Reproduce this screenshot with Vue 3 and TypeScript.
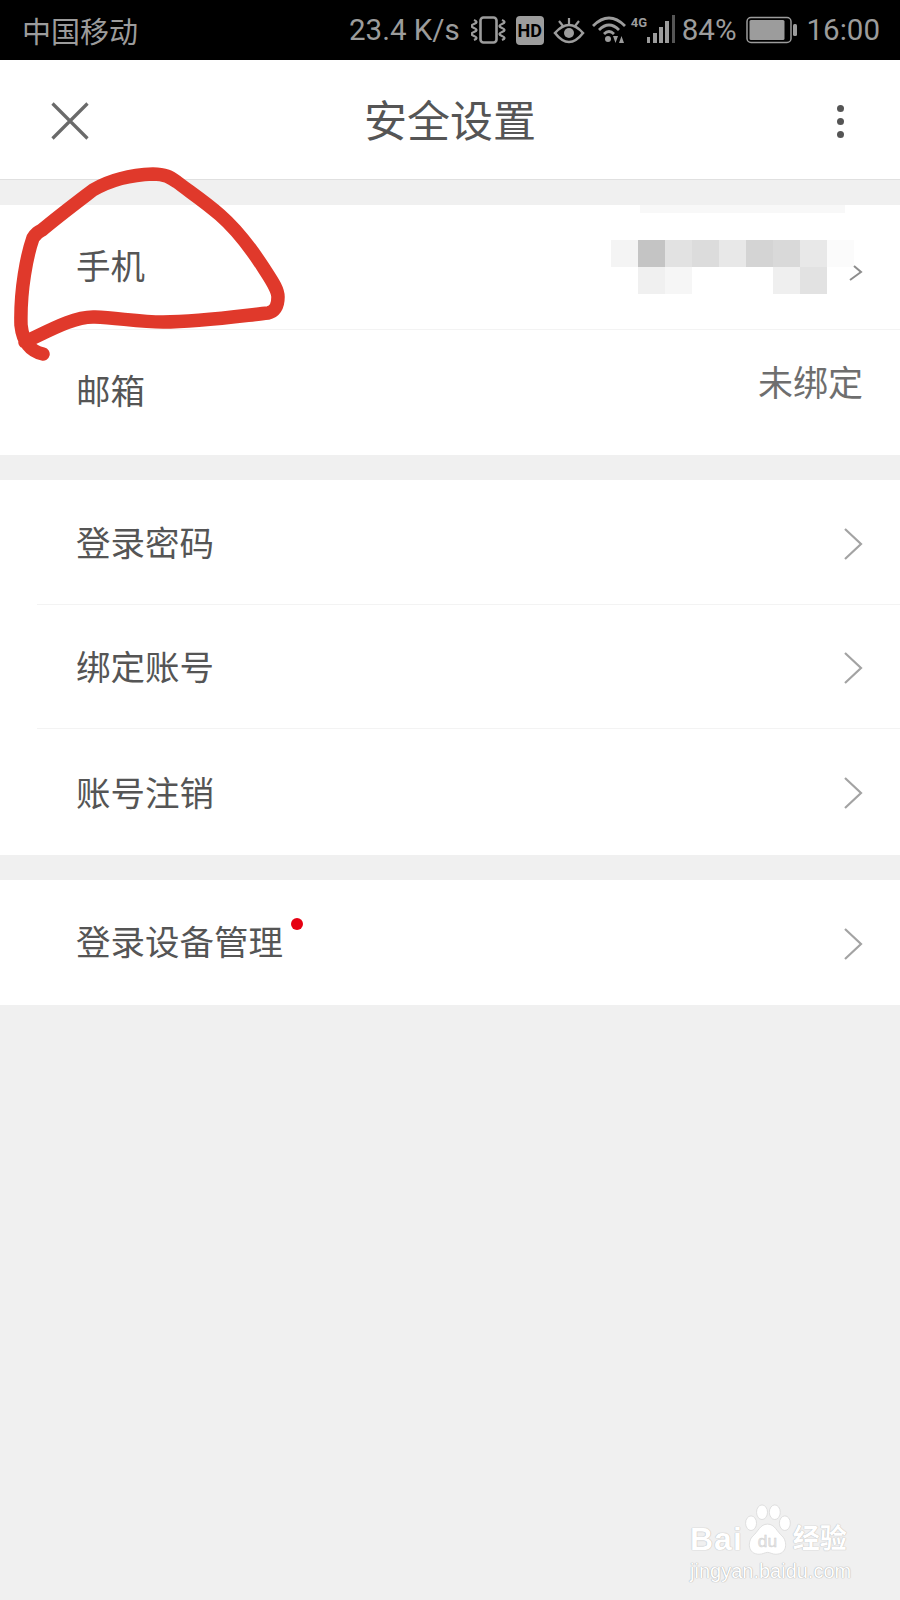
<script setup lang="ts">
interface Row {
  label: string;
  value?: string;
  arrow?: boolean;
  dot?: boolean;
  mosaic?: boolean;
}

const groups: Row[][] = [
  [
    { label: '手机', mosaic: true },
    { label: '邮箱', value: '未绑定' },
  ],
  [
    { label: '登录密码', arrow: true },
    { label: '绑定账号', arrow: true },
    { label: '账号注销', arrow: true },
  ],
  [{ label: '登录设备管理', arrow: true, dot: true }],
];

// pixelated phone number, two rows of blocks
const mosaic: string[] = [
  '#f4f4f4', '#c4c4c4', '#e2e2e2', '#dcdcdc', '#e8e8e8', '#d4d4d4', '#d9d9d9', '#e8e8e8', '#fbfbfb',
  '#ffffff', '#f0f0f0', '#f6f6f6', '#ffffff', '#ffffff', '#ffffff', '#efefef', '#e2e2e2', '#ffffff',
];
</script>

<template>
  <div class="page">
    <div class="status">
      <span class="carrier">中国移动</span>
      <div class="status-right">
        <span class="speed">23.4 K/s</span>
        <svg class="ic" width="36" height="30" viewBox="0 0 36 30" fill="none" stroke="#9c9c9c" stroke-width="2.400">
          <rect x="9.500" y="2.500" width="16" height="25" rx="3" stroke-width="2.600" />
          <path d="M3 5q5 2 0 4t0 4t0 4t0 4t0 4M31 5q5 2 0 4t0 4t0 4t0 4t0 4" />
        </svg>
        <span class="hd">HD</span>
        <svg class="ic" width="32" height="30" viewBox="0 0 32 30" fill="none" stroke="#9c9c9c" stroke-width="2.600">
          <path d="M2 18Q16 2 30 18Q16 36 2 18z" />
          <circle cx="16" cy="18" r="5" fill="#9c9c9c" stroke="none" />
          <path d="M16 3v6M6 6l4 5M26 6l-4 5" stroke-width="2.200" />
        </svg>
        <svg class="ic wifi" width="34" height="30" viewBox="0 0 34 30" fill="none" stroke="#9c9c9c" stroke-width="2.800">
          <path d="M1 11Q17-5 33 11M7 15Q17 5 27 15M12 19Q17 14 22 19" />
          <circle cx="16" cy="24" r="3" fill="#9c9c9c" stroke="none" />
          <path d="M21 21h5l-2.500 7zM27 28h5l-2.500-7z" fill="#9c9c9c" stroke="none" />
        </svg>
        <div class="signal">
          <span class="four-g">4G</span>
          <svg width="29" height="30" viewBox="0 0 29 30" fill="#9c9c9c">
            <rect x="1" y="22" width="3" height="6" />
            <rect x="7" y="18" width="4" height="10" />
            <rect x="13" y="12" width="4" height="16" />
            <rect x="19" y="6" width="4" height="22" />
            <rect x="26" y="0" width="3" height="28" fill="#555" />
          </svg>
        </div>
        <span class="pct">84%</span>
        <svg class="ic" width="51" height="28" viewBox="0 0 51 28">
          <rect x="1" y="1.500" width="44" height="25" rx="4" fill="none" stroke="#9c9c9c" stroke-width="1.500" />
          <rect x="3.500" y="4" width="35" height="20" rx="1.500" fill="#9c9c9c" />
          <rect x="47" y="8" width="4" height="12" rx="1.500" fill="#9c9c9c" />
        </svg>
        <span class="time">16:00</span>
      </div>
    </div>

    <header class="nav">
      <svg class="close" width="40" height="40" viewBox="0 0 40 40" stroke="#6a6a6a" stroke-width="3.200">
        <path d="M2.500 2.500l35 35M37.500 2.500l-35 35" />
      </svg>
      <h1 class="title">安全设置</h1>
      <div class="more"><i></i><i></i><i></i></div>
    </header>

    <section v-for="(group, g) in groups" :key="g" class="card">
      <div v-for="row in group" :key="row.label" class="row">
        <span class="label">{{ row.label }}</span>
        <i v-if="row.dot" class="dot"></i>
        <div class="spacer"></div>
        <div v-if="row.mosaic" class="mosaic">
          <i v-for="(c, n) in mosaic" :key="n" :style="{ background: c }"></i>
        </div>
        <span v-if="row.value" class="value">{{ row.value }}</span>
        <svg v-if="row.arrow" class="arrow" width="20" height="32" viewBox="0 0 20 32" fill="none" stroke="#a3a3a3" stroke-width="2.200">
          <path d="M2 1l16 15L2 31" />
        </svg>
        <svg v-if="row.mosaic" class="arrow-small" width="15" height="16" viewBox="0 0 15 16" fill="none" stroke="#8d8d8d" stroke-width="2">
          <path d="M6 1l7 6L2 15" />
        </svg>
      </div>
    </section>

    <div class="blur-band"></div>

    <svg class="scribble" width="300" height="220" viewBox="0 0 300 220" fill="none" stroke="#e0392b" stroke-width="13.500" stroke-linecap="round" stroke-linejoin="round">
      <path d="M43 189C30 186 23 178 21 160C20 125 27 90 33 73C36 68 38 67 42 65C60 50 76 38 93 25C105 18 125 10 153 9C165 9 170 12 177 17C190 27 204 36 220 50C236 64 250 82 263 102C272 116 278 124 278 132C278 142 274 147 268 148C240 151 200 157 163 157C140 157 118 153 95 152C75 151 50 165 25 177" />
    </svg>

    <div class="watermark">
      <div class="wm-top">
        <span class="wm-bai">Bai</span>
        <svg class="wm-paw" width="47" height="53" viewBox="0 0 50 58" fill="#fff" stroke="#dcdcdc" stroke-width="1">
          <ellipse cx="7" cy="21" rx="6" ry="8" />
          <ellipse cx="19" cy="9" rx="6" ry="8" />
          <ellipse cx="33" cy="9" rx="6" ry="8" />
          <ellipse cx="44" cy="21" rx="6" ry="8" />
          <path d="M25 22c8 0 10 8 16 13c6 6 6 20-7 20c-4 0-6-2-9-2s-5 2-9 2C3 55 3 41 9 35c6-5 8-13 16-13z" />
          <text x="25" y="47" text-anchor="middle" font-size="19" font-family="Liberation Sans, sans-serif" fill="#e6e6e6" stroke="#cfcfcf" stroke-width="0.500">du</text>
        </svg>
        <span class="wm-cn">经验</span>
      </div>
      <div class="wm-url">jingyan.baidu.com</div>
    </div>
  </div>
</template>

<style scoped>
.page {
  position: relative;
  width: 900px;
  height: 1600px;
  overflow: hidden;
  background: #f0f0f0;
  font-family: "Noto Sans CJK SC", "Liberation Sans", sans-serif;
}
.status {
  height: 60px;
  background: #000;
  color: #9c9c9c;
  display: flex;
  align-items: center;
  justify-content: space-between;
  padding: 0 20px 0 22px;
  box-sizing: border-box;
}
.carrier { font-size: 29px; line-height: 60px; }
.status-right {
  display: flex;
  align-items: center;
  font-family: Roboto, "Liberation Sans", sans-serif;
  font-size: 29.500px;
}
.speed { margin-right: 11px; }
.ic { display: block; }
.hd {
  width: 28px;
  height: 29px;
  margin: 0 9px;
  border-radius: 4px;
  background: #9c9c9c;
  color: #000;
  font-size: 18px;
  font-weight: 700;
  line-height: 29px;
  text-align: center;
}
.wifi { margin-left: 7px; }
.signal {
  position: relative;
  width: 44px;
  height: 30px;
  margin-left: 5px;
  display: flex;
  justify-content: flex-end;
}
.four-g {
  position: absolute;
  left: 0;
  top: 1px;
  font-size: 13px;
  line-height: 13px;
  font-weight: 700;
}
.pct { margin-left: 7px; margin-right: 9px; }
.time { margin-left: 10px; }
.nav {
  position: relative;
  height: 120px;
  background: #fff;
  border-bottom: 1px solid #e0e0e0;
  box-sizing: border-box;
  display: flex;
  align-items: center;
  justify-content: center;
}
.close { position: absolute; left: 50px; top: 41px; }
.title {
  margin: 0 0 4px;
  font-size: 43px;
  font-weight: 400;
  color: #555;
}
.more {
  position: absolute;
  left: 837px;
  top: 45px;
  display: flex;
  flex-direction: column;
  gap: 6px;
}
.more i {
  width: 7px;
  height: 7px;
  border-radius: 50%;
  background: #555;
}
.card {
  margin-top: 25px;
  background: #fff;
}
.row {
  position: relative;
  height: 124px;
  display: flex;
  align-items: center;
  padding: 0 37px 0 76px;
  box-sizing: border-box;
}
.row:last-child { height: 126px; }
.card:nth-of-type(2) .row:last-child { height: 127px; }
.card:nth-of-type(3) .row:last-child { height: 125px; }
.row + .row::before {
  content: "";
  position: absolute;
  left: 37px;
  right: 0;
  top: 0;
  height: 1px;
  background: #f3f3f3;
}
.label {
  margin-bottom: 6px;
  font-size: 34.500px;
  line-height: 50px;
  color: #555;
}
.card:nth-of-type(2) .label { margin-bottom: 2px; }
.dot {
  width: 12px;
  height: 12px;
  margin: -38px 0 0 8px;
  border-radius: 50%;
  background: #e60012;
}
.spacer { flex: 1; }
.value {
  margin-bottom: 24px;
  font-size: 35px;
  color: #6e6e6e;
}
.arrow { display: block; margin-top: 3px; }
.arrow-small { position: absolute; left: 848px; top: 60px; }
.mosaic {
  display: grid;
  grid-template-columns: repeat(9, 27px);
  grid-auto-rows: 27px;
  margin-right: 9px;
}
.mosaic i { display: block; }
.blur-band {
  position: absolute;
  left: 640px;
  top: 205px;
  width: 205px;
  height: 8px;
  background: #f8f8f8;
}
.scribble {
  position: absolute;
  left: 0;
  top: 165px;
}
.watermark {
  position: absolute;
  left: 690px;
  top: 1504px;
  width: 170px;
  color: #fff;
  font-family: "Liberation Sans", sans-serif;
}
.wm-top { display: flex; align-items: flex-end; height: 53px; }
.wm-bai {
  font-size: 32px;
  font-weight: 700;
  line-height: 36px;
  letter-spacing: 1px;
  text-shadow: 0 0 1px #bbb, 0 0 1px #bbb;
}
.wm-paw { margin-left: 1px; }
.wm-cn {
  font-family: "Noto Sans CJK SC", sans-serif;
  font-size: 27px;
  font-weight: 700;
  line-height: 40px;
  margin-left: 2px;
  text-shadow: 0 0 1px #bbb, 0 0 1px #bbb;
}
.wm-url {
  font-size: 20px;
  line-height: 24px;
  margin-top: 2px;
  white-space: nowrap;
  text-shadow: 0 0 1px #aaa, 0 0 1px #aaa;
}
</style>
